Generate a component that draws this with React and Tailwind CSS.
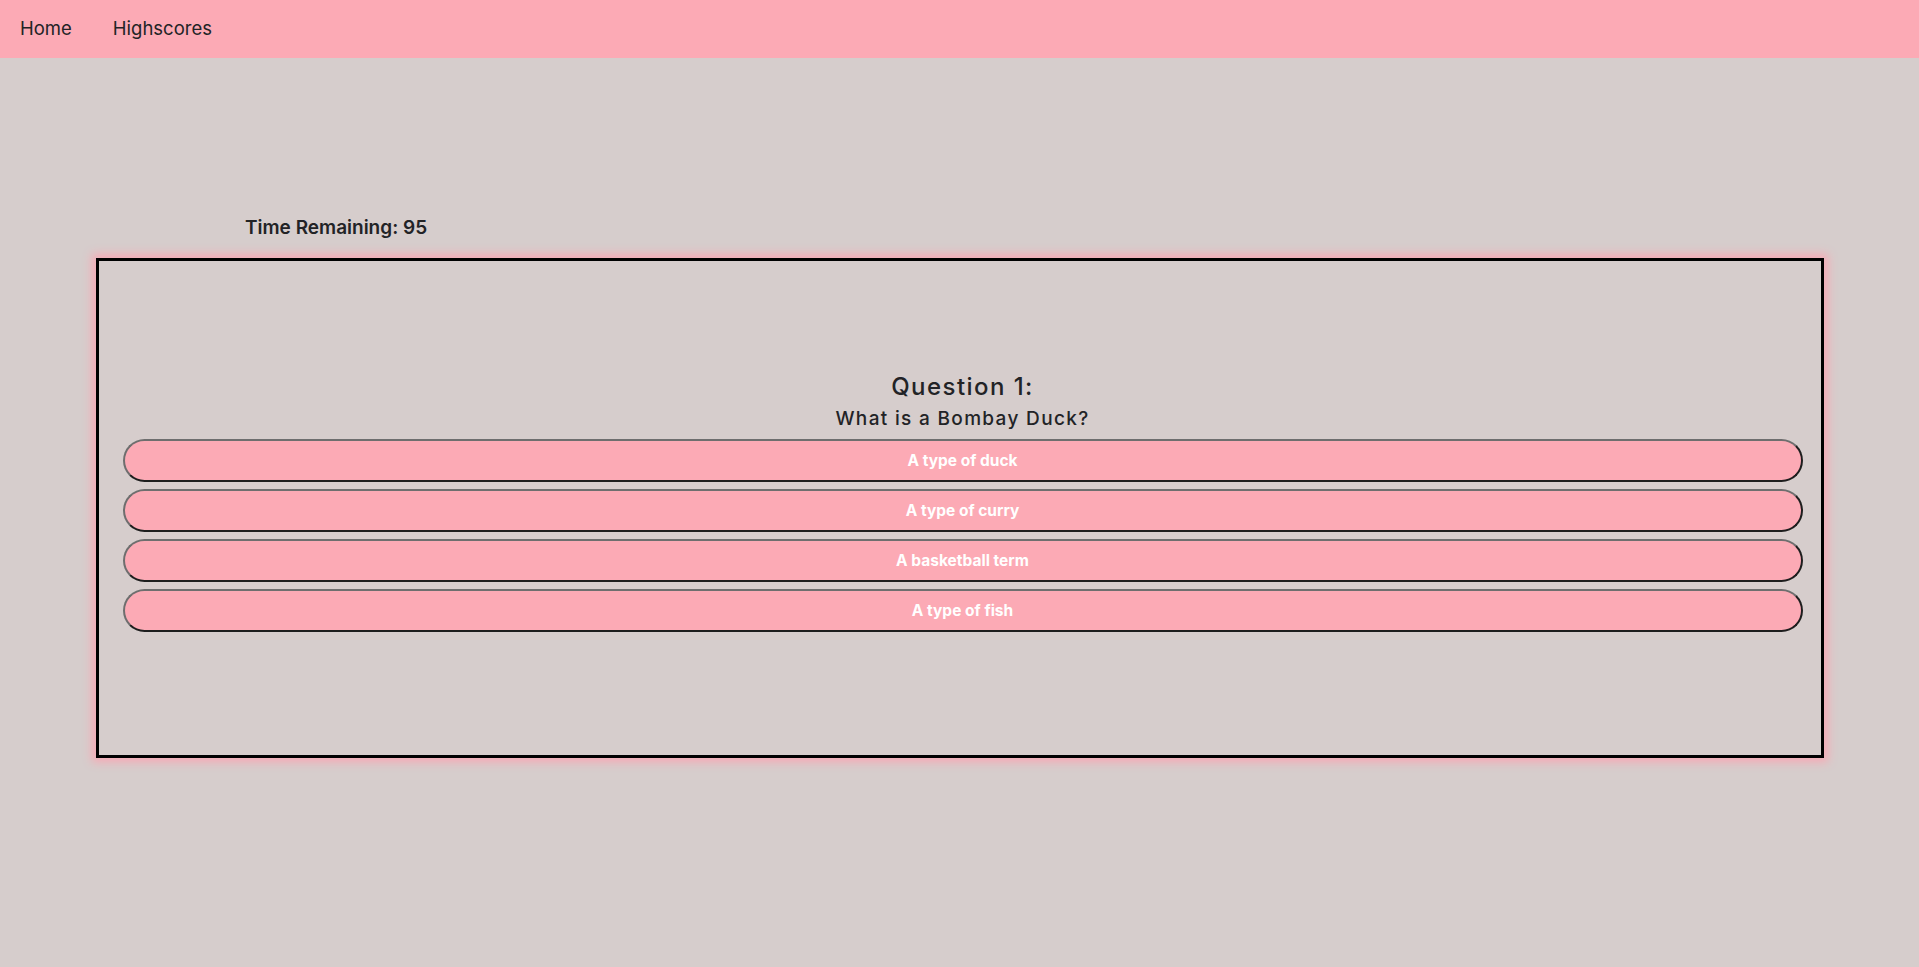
import React from "react";

const answers = ["A type of duck", "A type of curry", "A basketball term", "A type of fish"];

export default function App() {
  return (
    <div className="min-h-[967px] w-full bg-[#d6cdcc] text-[#222326]" style={{ fontFamily: "Inter, 'Noto Sans', sans-serif" }}>
      <nav className="flex h-[58px] items-center gap-[41px] bg-[#fcaab5] pl-5 text-[18.5px]">
        <a className="cursor-pointer">Home</a>
        <a className="cursor-pointer">Highscores</a>
      </nav>
      <div className="pt-[158px]">
        <div className="pl-[245px] text-[19px] font-semibold leading-[24px]">Time Remaining: 95</div>
        <div className="mx-auto mt-[18px] flex h-[500px] w-[1728px] flex-col border-[3px] border-black pt-[111px] pl-[24px] pr-[18px] shadow-[0_0_9px_4px_#f7a9b5]">
          <h2 className="text-center text-[24px] font-medium leading-[30px] tracking-[0.06em]">Question 1:</h2>
          <p className="mt-[5px] text-center text-[19px] font-medium leading-[24px] tracking-[0.07em]">What is a Bombay Duck?</p>
          <div className="mt-[8px] flex flex-col gap-[7px]">
            {answers.map((a) => (
              <button
                key={a}
                className="h-[43px] w-full rounded-[22px] border-2 border-t-[#6e6e6e] border-l-[#6e6e6e] border-r-[#1d1d1d] border-b-[#1d1d1d] bg-[#fcaab5] text-[15.5px] font-bold text-white"
              >
                {a}
              </button>
            ))}
          </div>
        </div>
      </div>
    </div>
  );
}
